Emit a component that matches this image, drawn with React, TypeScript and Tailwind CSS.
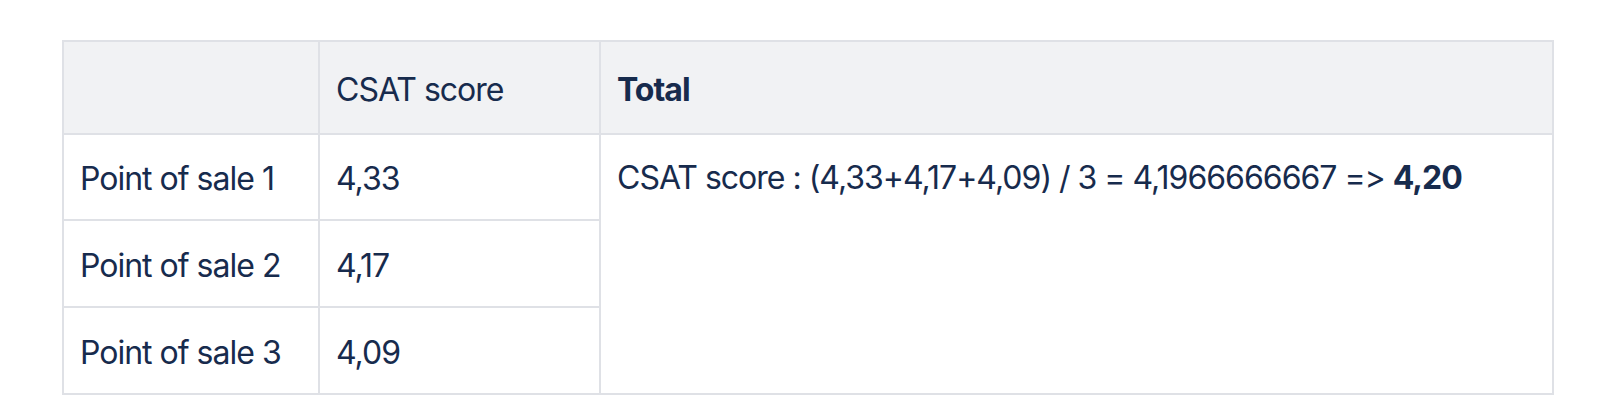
import React from "react";

const cell = "border-2 border-[#dfe1e6] pl-[16px] pr-[16px] pt-[4px] pb-0 align-middle";

export default function App() {
  return (
    <div
      className="w-[1600px] h-[412px] bg-white pt-[40px] pl-[62px] text-[#172b4d] [font-feature-settings:'calt'_0,'liga'_0]"
      style={{ fontFamily: "Inter, 'Noto Sans', sans-serif" }}
    >
      <table className="border-collapse text-[32px] leading-[40px] tracking-[-1px]">
        <colgroup>
          <col className="w-[256px]" />
          <col className="w-[281px]" />
          <col className="w-[953px]" />
        </colgroup>
        <thead>
          <tr className="h-[93px] bg-[#f1f2f4]">
            <th className={`${cell} font-normal text-left`}></th>
            <th className={`${cell} font-normal text-left`}>CSAT score</th>
            <th className={`${cell} font-bold text-left`}>Total</th>
          </tr>
        </thead>
        <tbody>
          <tr className="h-[86px]">
            <td className={cell}>Point of sale 1</td>
            <td className={cell}>4,33</td>
            <td rowSpan={3} className="border-2 border-[#dfe1e6] px-[16px] align-top pt-[23px]">
              CSAT score : (4,33+4,17+4,09) / 3 = 4,1966666667 =&gt; <strong className="font-bold">4,20</strong>
            </td>
          </tr>
          <tr className="h-[87px]">
            <td className={cell}>Point of sale 2</td>
            <td className={cell}>4,17</td>
          </tr>
          <tr className="h-[87px]">
            <td className={cell}>Point of sale 3</td>
            <td className={cell}>4,09</td>
          </tr>
        </tbody>
      </table>
    </div>
  );
}
